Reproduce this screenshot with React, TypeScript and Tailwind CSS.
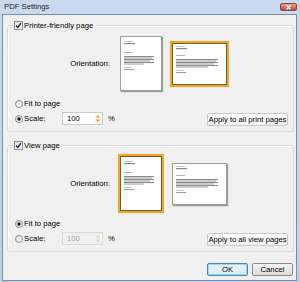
import React from "react";

function CheckBox() {
  return (
    <svg width="9" height="9" viewBox="0 0 9 9" className="block">
      <defs>
        <linearGradient id="cbg" x1="0" y1="0" x2="1" y2="1">
          <stop offset="0" stopColor="#dcdcdc" />
          <stop offset="1" stopColor="#ffffff" />
        </linearGradient>
      </defs>
      <rect x="0.5" y="0.5" width="8" height="8" fill="url(#cbg)" stroke="#8e8f8f" />
      <path d="M2 4.5 L3.8 6.4 L7 2.2" fill="none" stroke="#1e2b3a" strokeWidth="1.4" />
    </svg>
  );
}

function Radio({ checked }: { checked?: boolean }) {
  return (
    <svg width="8" height="8" viewBox="0 0 8 8" className="block">
      <defs>
        <linearGradient id="rbg" x1="0" y1="0" x2="1" y2="1">
          <stop offset="0" stopColor="#d8d8d8" />
          <stop offset="1" stopColor="#ffffff" />
        </linearGradient>
      </defs>
      <circle cx="4" cy="4" r="3.5" fill="url(#rbg)" stroke="#8e8f8f" />
      {checked && <circle cx="4" cy="4" r="1.7" fill="#1b1b1b" />}
    </svg>
  );
}

function Thumb({ landscape, selected }: { landscape?: boolean; selected?: boolean }) {
  const w = landscape ? 55 : 42;
  const h = landscape ? 42 : 55;
  const bw = landscape ? 42 : 30;
  const block = [0, 1.5, 3, 4.5, 6, 7.5].map((d, i) => ({
    y: 19 + d,
    w: [bw, bw - 2, bw, bw - 4, bw, bw - 10][i],
  }));
  const off = landscape ? -4 : 0;
  return (
    <div
      className={
        selected
          ? "bg-white border border-[#6b5c44] outline-2 outline-[#f6a516]"
          : "bg-white border border-[#9d9d9d] shadow-[1px_1px_1px_rgba(0,0,0,0.35)]"
      }
      style={{ width: w, height: h }}
    >
      <svg width={w - 2} height={h - 2} viewBox={`0 0 ${w - 2} ${h - 2}`} className="block">
        <rect x="3" y={4 + (landscape ? -2 : 0)} width="9" height="1" fill="#c4c4c4" />
        <rect x="3" y={6 + (landscape ? -2 : 0)} width="11" height="1.2" fill="#8c8c8c" />
        <rect x="3" y={15 + off} width="9" height="1" fill="#b4b4b4" />
        {block.map((b, i) => (
          <rect key={i} x="3" y={b.y + off} width={b.w} height="1.1" fill={i % 2 ? "#a8a8a8" : "#8a8a8a"} />
        ))}
        <rect x="3" y={30 + off} width="8" height="1" fill="#c4c4c4" />
        <rect x="3" y={32 + off} width="10" height="1.1" fill="#a0a0a0" />
      </svg>
    </div>
  );
}

function Spin({ disabled }: { disabled?: boolean }) {
  const c = disabled ? "#e3c9a6" : "#e8952a";
  return (
    <svg width="8" height="11" viewBox="0 0 8 11" className="block">
      <path d="M2 4.5 L4 2 L6 4.5 Z" fill={c} />
      <path d="M2 6.5 L4 9 L6 6.5 Z" fill={c} />
    </svg>
  );
}

function Group({
  title,
  printSel,
  fit,
  applyLabel,
  disabled,
}: {
  title: string;
  printSel: "portrait" | "landscape";
  fit: boolean;
  applyLabel: string;
  disabled: boolean;
}) {
  return (
    <div className="relative h-[107px] border border-[#d5dfe5] rounded-[3px] shadow-[inset_1px_1px_0_#ffffff]">
      <div className="absolute left-[5px] top-[-6px] flex items-center gap-[1px] bg-[#f0f0f0] pl-[1px] pr-[2px] h-[11px]">
        <CheckBox />
        <span>{title}</span>
      </div>
      <div className="pt-[9px] flex flex-col">
        <div className="h-[57px] flex items-center">
          <div className="w-[102px] text-right">Orientation:</div>
          <div className="ml-[10px] flex items-center gap-[10px]">
            <Thumb selected={printSel === "portrait"} />
            <Thumb landscape selected={printSel === "landscape"} />
          </div>
        </div>
        <div className="mt-[5px] flex items-end justify-between pl-[7px] pr-[5px]">
          <div className="flex flex-col gap-[2px]">
            <div className="h-[13px] flex items-center gap-[1px]">
              <Radio checked={fit} />
              <span>Fit to page</span>
            </div>
            <div className="h-[13px] flex items-center">
              <Radio checked={!fit} />
              <span className="ml-[1px] w-[38px]">Scale:</span>
              <div
                className={
                  "flex h-[13px] border " +
                  (disabled ? "border-[#d9d9d9] text-[#a8a8a8]" : "border-[#c8ccd2] text-black")
                }
              >
                <div className={"w-[31px] pl-[4px] flex items-center " + (disabled ? "bg-[#f0f0f0]" : "bg-white")}>100</div>
                <div className={"w-[8px] flex items-center " + (disabled ? "bg-[#f0f0f0]" : "bg-[#f7f7f7]")}>
                  <Spin disabled={disabled} />
                </div>
              </div>
              <span className="ml-[5px]">%</span>
            </div>
          </div>
          <button className="mb-[-1px] h-[13px] w-[81px] flex items-center justify-center rounded-[2px] border border-[#c9c9c9] bg-gradient-to-b from-[#ffffff] to-[#f1f1f1] text-black leading-none">
            {applyLabel}
          </button>
        </div>
      </div>
    </div>
  );
}

export default function App() {
  return (
    <div className="w-[300px] h-[282px] flex flex-col bg-gradient-to-b from-[#c9daee] to-[#bcd0e7] font-['Liberation_Sans',Arial,sans-serif] text-[7.7px] leading-none text-black overflow-hidden">
      <div className="h-[14px] flex items-center justify-between pl-[4px] pr-[3px] shrink-0">
        <span className="text-[7.7px] text-[#1e1e1e]">PDF Settings</span>
        <div className="w-[17px] h-[8px] rounded-[2px] border border-[#8d4037] bg-gradient-to-b from-[#e3a194] to-[#c6463a] flex items-center justify-center">
          <svg width="5" height="5" viewBox="0 0 5 5">
            <path d="M0.5 0.5 L4.5 4.5 M4.5 0.5 L0.5 4.5" stroke="#ffffff" strokeWidth="1.3" />
          </svg>
        </div>
      </div>
      <div className="flex-1 ml-[2px] mr-[3px] mb-[1px] border border-[#7d8ea3] bg-[#f0f0f0] flex flex-col pl-[4px] pr-[2px]">
        <div className="mt-[10px]">
          <Group title="Printer-friendly page" printSel="landscape" fit={false} applyLabel="Apply to all print pages" disabled={false} />
        </div>
        <div className="mt-[13px]">
          <Group title="View page" printSel="portrait" fit={true} applyLabel="Apply to all view pages" disabled={true} />
        </div>
        <div className="mt-[11px] flex justify-end gap-[4px] pr-[1px]">
          <button className="h-[13px] w-[41px] rounded-[2px] border border-[#3c8ccd] bg-gradient-to-b from-[#eef6fc] to-[#d8e9f6] shadow-[inset_0_0_0_1px_#9fd4f5] flex items-center justify-center leading-none">
            OK
          </button>
          <button className="h-[13px] w-[41px] rounded-[2px] border border-[#8a8a8a] bg-gradient-to-b from-[#f4f4f4] to-[#dcdcdc] flex items-center justify-center leading-none">
            Cancel
          </button>
        </div>
      </div>
    </div>
  );
}
